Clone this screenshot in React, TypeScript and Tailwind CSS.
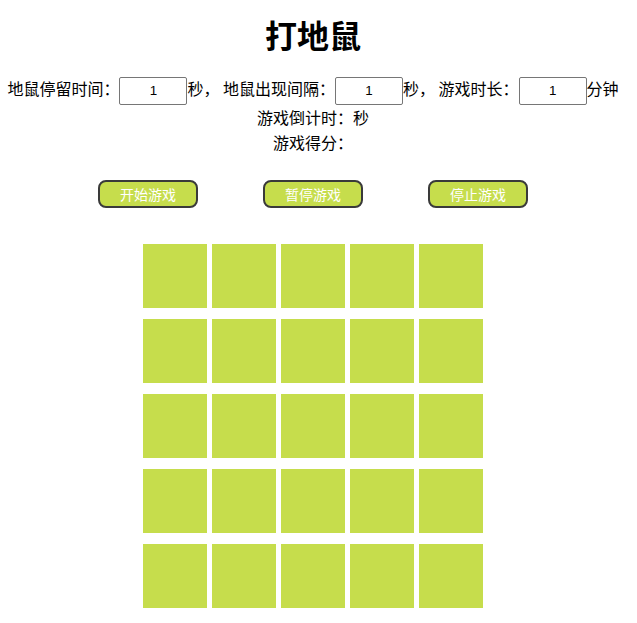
const cells = Array.from({ length: 25 }, (_, i) => i);

function NumInput() {
  return (
    <input
      type="text"
      defaultValue="1"
      className="w-[68px] h-[28px] border border-[#767676] rounded-[2px] text-center text-[13.33px] align-middle outline-none"
      style={{ fontFamily: 'Arial, "Liberation Sans", sans-serif' }}
    />
  );
}

export default function App() {
  const buttons = ['开始游戏', '暂停游戏', '停止游戏'];

  return (
    <div
      className="w-[626px] bg-white text-black text-[16px]"
      style={{ fontFamily: '"Noto Sans CJK SC", "Microsoft YaHei", sans-serif' }}
    >
      <h1 className="text-center text-[32px] font-bold leading-[37px] pt-[16px]">打地鼠</h1>

      <div className="mt-[21px] text-center leading-[28px] whitespace-nowrap">
        地鼠停留时间：<NumInput />秒， 地鼠出现间隔：<NumInput />秒， 游戏时长：<NumInput />分钟
      </div>
      <div className="text-center leading-[25px]">游戏倒计时：秒</div>
      <div className="text-center leading-[25px]">游戏得分：</div>

      {/* 控制按钮 */}
      <div className="flex justify-center gap-[65px] mt-[25px]">
        {buttons.map((b) => (
          <button
            key={b}
            className="w-[100px] h-[28px] rounded-[8px] border-2 border-[#3a3a3a] bg-[#c6dd4c] text-white text-[14px] leading-none"
          >
            {b}
          </button>
        ))}
      </div>

      {/* 地鼠洞 */}
      <div className="grid grid-cols-[repeat(5,64px)] justify-center gap-x-[5px] gap-y-[11px] mt-[36px]">
        {cells.map((c) => (
          <div key={c} className="w-[64px] h-[64px] bg-[#c6dd4c]" />
        ))}
      </div>
    </div>
  );
}
